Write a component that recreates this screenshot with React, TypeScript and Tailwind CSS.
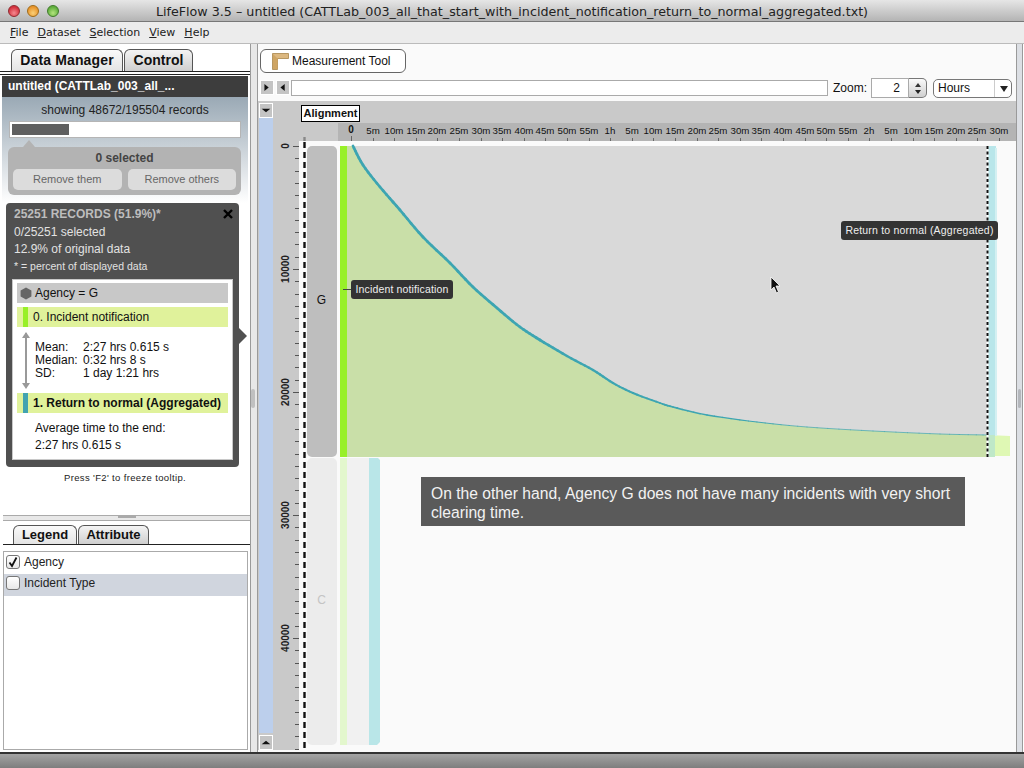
import React from 'react';

const sans = "font-['Liberation_Sans',Arial,sans-serif]";

const rulerLabels = [
    '5m', '10m', '15m', '20m', '25m', '30m', '35m', '40m', '45m', '50m', '55m', '1h',
    '5m', '10m', '15m', '20m', '25m', '30m', '35m', '40m', '45m', '50m', '55m', '2h',
    '5m', '10m', '15m', '20m', '25m', '30m',
];

// curve of the Incident notification -> Return to normal flow, in page coordinates
const curveKnots: [number, number][] = [
    [353, 146], [363, 165], [380, 187], [400, 210], [423, 237], [450, 263],
    [473, 287], [497, 308], [520, 327], [540, 340], [567, 356], [593, 370], [613, 383], [633, 393],
    [660, 403], [673, 407], [707, 415], [757, 422], [807, 427], [873, 431], [940, 434], [988, 435],
];

// catmull-rom, so the line does not show its knots
const curve: [number, number][] = [];
curveKnots.slice(0, -1).forEach((p1, i) => {
    const p0 = curveKnots[Math.max(i - 1, 0)];
    const p2 = curveKnots[i + 1];
    const p3 = curveKnots[Math.min(i + 2, curveKnots.length - 1)];
    for (let s = 0; s < 6; s++) {
        const t = s / 6;
        const at = (a: number, b: number, c: number, d: number) =>
            0.5 * (2 * b + (c - a) * t + (2 * a - 5 * b + 4 * c - d) * t * t + (3 * b - a - 3 * c + d) * t * t * t);
        curve.push([at(p0[0], p1[0], p2[0], p3[0]), at(p0[1], p1[1], p2[1], p3[1])]);
    }
});
curve.push(curveKnots[curveKnots.length - 1]);

const curvePoints = curve.map((p) => p.join(',')).join(' ');

const Tab: React.FC<{ label: string; active?: boolean; className: string }> = ({ label, active, className }) => (
    <div
        className={`flex items-center justify-center rounded-t-[6px] border border-b-0 border-[#555] font-bold text-[#111] ${className} ${
            active ? 'bg-gradient-to-b from-[#f4f4f4] to-[#cfcfcf]' : 'bg-gradient-to-b from-[#fafafa] to-[#e4e4e4]'
        }`}
    >
        {label}
    </div>
);

const MiniButton: React.FC<{ dir: 'left' | 'right' | 'up' | 'down' }> = ({ dir }) => {
    const points = {
        right: '4,3 9,7 4,11',
        left: '9,3 4,7 9,11',
        up: '2,9 7,5 12,9',
        down: '2,5 7,9 12,5',
    }[dir];
    return (
        <div className="h-[15px] w-[14px] border border-white bg-[#c4c4c4]">
            <svg width="12" height="13" viewBox="0 0 14 14">
                <polygon points={points} fill="#111" />
            </svg>
        </div>
    );
};

const Checkbox: React.FC<{ checked?: boolean }> = ({ checked }) => (
    <div className="flex h-[14px] w-[14px] items-center justify-center rounded-[3px] border border-[#777] bg-gradient-to-b from-white to-[#e8e8e8]">
        {checked && (
            <svg width="12" height="12" viewBox="0 0 12 12">
                <path d="M2.5 6.5 L5 10 L9.5 1.5" fill="none" stroke="#111" strokeWidth="1.8" />
            </svg>
        )}
    </div>
);

const Chart: React.FC = () => (
    <svg width="743" height="649" viewBox="273 101 743 649" className="block">
        <rect x="273" y="101" width="743" height="649" fill="#c9c9c9" />
        <rect x="338" y="123" width="678" height="18" fill="#b4b4b4" />
        <rect x="299" y="141" width="717" height="609" fill="#fafafa" />

        {/* top ruler */}
        <text x="351" y="133" textAnchor="middle" fontSize="10" fontWeight="700" fill="#111">0</text>
        <line x1="351.5" x2="351.5" y1="136" y2="141" stroke="#666" />
        {rulerLabels.map((label, i) => {
            const x = Math.round(351 + (i + 1) * 21.6);
            return (
                <g key={i}>
                    <text x={x} y="134" textAnchor="middle" fontSize="9.7" fill="#111">{label}</text>
                    <line x1={x + 0.5} x2={x + 0.5} y1="138" y2="141" stroke="#666" />
                </g>
            );
        })}

        {/* left axis */}
        {Array.from({ length: 50 }, (_, i) => {
            const y = Math.round(146 + i * 12.3);
            return <line key={i} x1={i % 10 === 0 ? 293 : 295} x2="299" y1={y + 0.5} y2={y + 0.5} stroke="#555" />;
        })}
        {[0, 10000, 20000, 30000, 40000].map((v, i) => {
            const y = 146 + i * 123;
            return (
                <text key={v} x="289" y={y} textAnchor="middle" fontSize="10" fontWeight="700" fill="#222" transform={`rotate(-90 289 ${y})`}>
                    {v}
                </text>
            );
        })}
        <line x1="304.5" x2="304.5" y1="137" y2="141" stroke="#888" strokeWidth="2.4" />
        <line x1="304.5" x2="304.5" y1="142" y2="750" stroke="#111" strokeWidth="2.4" strokeDasharray="6 4" />

        {/* lower sequence, faded */}
        <rect x="307" y="458" width="30" height="287" rx="5" fill="#ececec" />
        <rect x="340" y="458" width="7" height="287" fill="#e3f7cd" />
        <rect x="347" y="458" width="22" height="287" fill="#f1f1f1" />
        <path d="M369 458 H378 L380 460 V742 L377 745 H369 Z" fill="#b9e6e8" />
        <text x="321.5" y="604" textAnchor="middle" fontSize="12" fill="#c4c4c4">C</text>

        {/* G sequence */}
        <rect x="347" y="146" width="641" height="311" fill="#d9d9d9" />
        <polygon points={`347,146 ${curvePoints} 988,457 347,457`} fill="#c9dfa8" />
        <polygon points="988,435 1010,436 1010,456 988,456" fill="#dff8b4" />
        <rect x="988" y="146" width="8" height="290" fill="#b9e6ea" />
        <rect x="995" y="148" width="2" height="288" fill="#d4f0f2" />
        <rect x="988" y="435" width="7" height="22" fill="#bfe8c8" />
        <rect x="307" y="146" width="30" height="311" rx="5" fill="#bebebe" />
        <rect x="340" y="146" width="7" height="311" fill="#98f028" />
        <text x="321.5" y="304" textAnchor="middle" fontSize="12" fill="#111">G</text>
        <line x1="343" x2="351" y1="289.5" y2="289.5" stroke="#444" />
        {curve.slice(1).map((p, i) => {
            const prev = curve[i];
            const width = p[0] < 540 ? 2.7 : Math.max(0.7, 2.7 - ((p[0] - 540) / 260) * 2);
            return <line key={i} x1={prev[0]} y1={prev[1]} x2={p[0]} y2={p[1]} stroke="#3da5b2" strokeWidth={width} strokeLinecap="round" />;
        })}
        <line x1="987.5" x2="987.5" y1="146" y2="457" stroke="#fff" strokeWidth="2" />
        <line x1="987.5" x2="987.5" y1="146" y2="457" stroke="#111" strokeWidth="2" strokeDasharray="3 2.5" />
    </svg>
);

const Sidebar: React.FC = () => (
    <aside className="flex w-[250px] shrink-0 flex-col bg-white">
        <div className="flex h-[27px] items-end gap-[1px] pl-[11px]">
            <Tab label="Data Manager" className="h-[22px] w-[112px] text-[14px] tracking-[0.15px]" />
            <Tab label="Control" active className="h-[22px] w-[69px] text-[14px]" />
        </div>
        <div className="h-[4px] border-y border-[#222]" />

        <div className="mx-[2px] mt-[1px] flex h-[21px] items-center bg-[#3d3d3d] pb-[1px] pl-[6px] text-[12px] font-bold text-white">
            untitled (CATTLab_003_all_...
        </div>

        <div className="mx-[2px] bg-gradient-to-b from-[#9aa9b5] to-white px-[7px] pb-[8px]">
            <div className="pt-[5px] text-center text-[12px] leading-[16px] text-[#222]">showing 48672/195504 records</div>
            <div className="mt-[3px] flex h-[17px] items-center border border-[#b5b5b5] bg-white pl-[2px]">
                <div className="h-[11px] w-[57px] bg-[#5f5f5f]" />
            </div>
            <div className="ml-[14px] mt-[2px] h-0 w-0 border-x-[6px] border-b-[7px] border-x-transparent border-b-[#b3b3b3]" />
            <div className="-ml-[1px] w-[233px] rounded-[6px] bg-[#b3b3b3] px-[5px] pb-[5px]">
                <div className="flex h-[22px] items-center justify-center text-[12px] font-bold text-[#444]">0 selected</div>
                <div className="flex gap-[6px]">
                    <div className="flex h-[21px] w-[109px] items-center justify-center rounded-[5px] bg-[#dcdcdc] text-[11px] text-[#666]">Remove them</div>
                    <div className="flex h-[21px] w-[109px] items-center justify-center rounded-[5px] bg-[#dcdcdc] text-[11px] text-[#666]">Remove others</div>
                </div>
            </div>
        </div>

        <div className="relative ml-[6px] w-[233px] rounded-[4px] bg-[#505050] px-[6px] pb-[7px]">
            <svg width="10" height="10" viewBox="0 0 10 10" className="absolute right-[6px] top-[6px]">
                <path d="M1 1 L9 9 M9 1 L1 9" stroke="#000" strokeWidth="2.4" />
            </svg>
            <div className="absolute -right-[8px] top-[125px] h-0 w-0 border-y-[8px] border-l-[8px] border-y-transparent border-l-[#505050]" />
            <div className="pl-[2px] pt-[3px] text-[12px] leading-[17px] text-[#e2e2e2]">
                <div className="font-bold text-[#bdbdbd]">25251 RECORDS (51.9%)*</div>
                <div className="mt-[1px]">0/25251 selected</div>
                <div>12.9% of original data</div>
                <div className="text-[10.5px]">* = percent of displayed data</div>
            </div>
            <div className="mt-[4px] h-[181px] border border-[#c8c8c8] bg-white px-[4px] pt-[3px] text-[12px] text-[#111]">
                <div className="flex h-[20px] items-center gap-[3px] bg-[#c8c8c8] pl-[3px]">
                    <svg width="12" height="13" viewBox="0 0 12 13">
                        <polygon points="6,0.5 11.4,3.5 11.4,9.5 6,12.5 0.6,9.5 0.6,3.5" fill="#666" />
                    </svg>
                    Agency = G
                </div>
                <div className="mt-[4px] flex h-[20px] items-center bg-[#e0f29b]">
                    <div className="ml-[6px] h-full w-[5px] bg-[#98f028]" />
                    <span className="ml-[5px]">0. Incident notification</span>
                </div>
                <div className="flex h-[66px] items-start">
                    <svg width="18" height="66" viewBox="0 0 18 66" className="shrink-0">
                        <line x1="9" x2="9" y1="6" y2="58" stroke="#999" strokeWidth="2" />
                        <polygon points="9,5 13,11 5,11" fill="#999" />
                        <polygon points="9,62 13,56 5,56" fill="#999" />
                    </svg>
                    <div className="mt-[14px] grid grid-cols-[48px_auto] text-[12px] leading-[13px]">
                        <span>Mean:</span>
                        <span>2:27 hrs 0.615 s</span>
                        <span>Median:</span>
                        <span>0:32 hrs 8 s</span>
                        <span>SD:</span>
                        <span>1 day 1:21 hrs</span>
                    </div>
                </div>
                <div className="flex h-[20px] items-center bg-[#e0f29b] font-bold">
                    <div className="ml-[6px] h-full w-[5px] bg-[#42a3b0]" />
                    <span className="ml-[5px]">1. Return to normal (Aggregated)</span>
                </div>
                <div className="pl-[18px] pt-[7px] leading-[17px]">
                    <div>Average time to the end:</div>
                    <div>2:27 hrs 0.615 s</div>
                </div>
            </div>
        </div>

        <div className="mt-[5px] text-center text-[9.5px] leading-[12px] tracking-[0.35px] text-[#222]">Press 'F2' to freeze tooltip.</div>

        <div className="flex-1" />

        <div className="flex h-[237px] flex-col">
            <div className="ml-[3px] flex h-[6px] justify-center border-y border-[#aaa] bg-[#e8e8e8]">
                <div className="h-[2px] w-[18px] bg-[#aaa]" />
            </div>
            <div className="ml-[3px] mt-[3px] flex h-[20px] items-end gap-[1px] pl-[10px]">
                <Tab label="Legend" className="h-[19px] w-[64px] text-[13px]" />
                <Tab label="Attribute" active className="h-[19px] w-[71px] text-[13px]" />
            </div>
            <div className="ml-[3px] h-[2px] border-t border-[#222]" />
            <div className="ml-[3px] mt-[5px] h-[199px] w-[245px] border border-[#aaa] bg-white text-[12px] text-[#222]">
                <div className="flex h-[22px] items-center gap-[4px] pb-[3px] pl-[2px]">
                    <Checkbox checked />
                    Agency
                </div>
                <div className="flex h-[22px] items-center gap-[4px] bg-[#d0d5de] pb-[4px] pl-[2px]">
                    <Checkbox />
                    Incident Type
                </div>
            </div>
        </div>
    </aside>
);

const App: React.FC = () => {
    return (
        <div className={`flex h-[768px] w-[1024px] flex-col overflow-hidden bg-white ${sans}`}>
            <header className="relative flex h-[22px] shrink-0 items-center justify-center border-b border-[#777] bg-gradient-to-b from-[#e6e6e6] to-[#b4b4b4] pt-[3px] font-['DejaVu_Sans',sans-serif] text-[12.7px] text-[#222]">
                <div className="absolute left-[8px] top-[5px] flex gap-[7px]">
                    <span className="h-[12px] w-[12px] rounded-full border border-[#8f2a30] bg-[radial-gradient(circle_at_50%_70%,#f58a90,#d3303c_70%)]" />
                    <span className="h-[12px] w-[12px] rounded-full border border-[#a06a18] bg-[radial-gradient(circle_at_50%_70%,#fad078,#e8942a_70%)]" />
                    <span className="ml-[1px] h-[12px] w-[12px] rounded-full border border-[#3f7a2a] bg-[radial-gradient(circle_at_50%_70%,#b4e47e,#5fae3c_70%)]" />
                </div>
                LifeFlow 3.5 – untitled (CATTLab_003_all_that_start_with_incident_notification_return_to_normal_aggregated.txt)
            </header>

            <nav className="flex h-[22px] shrink-0 items-center gap-[9px] border-b border-[#bbb] bg-[#ececec] pl-[10px] pt-[1px] font-['DejaVu_Sans',sans-serif] text-[11px] text-[#222]">
                <span><u>F</u>ile</span>
                <span><u>D</u>ataset</span>
                <span><u>S</u>election</span>
                <span><u>V</u>iew</span>
                <span><u>H</u>elp</span>
            </nav>

            <main className="flex h-[708px] shrink-0">
                <Sidebar />

                <div className="flex w-[8px] shrink-0 items-center border-x border-[#9a9a9a] bg-[#e8e8e8]">
                    <div className="h-[19px] w-[4px] rounded-[2px] bg-[#c0c0c0]" />
                </div>

                <section className="flex w-[758px] shrink-0 flex-col bg-[#fafafa]">
                    <div className="pl-[2px] pt-[5px]">
                        <div className="flex h-[24px] w-[146px] items-center gap-[3px] rounded-[6px] border border-[#666] bg-white pl-[11px] text-[12px] text-[#111]">
                            <svg width="17" height="17" viewBox="0 0 17 17">
                                <polygon points="0.5,0.5 16.5,0.5 16.5,5.5 5.5,5.5 5.5,16.5 0.5,16.5" fill="#dcb880" stroke="#a8854a" strokeWidth="0.8" />
                                <polygon points="1,1 5.5,5.5 5.5,16 1,16" fill="#cfa563" />
                            </svg>
                            Measurement Tool
                        </div>
                    </div>

                    <div className="mt-[7px] flex h-[21px] items-start pl-[2px]">
                        <MiniButton dir="right" />
                        <div className="ml-[2px]"><MiniButton dir="left" /></div>
                        <div className="ml-[1px] h-[16px] w-[537px] border border-[#aaa] bg-white" />
                        <span className="ml-[5px] text-[12px] leading-[16px] text-[#111]">Zoom:</span>
                        <div className="ml-[4px] flex h-[20px] w-[56px] -translate-y-[2px]">
                            <div className="w-[38px] border border-[#aaa] bg-white pr-[8px] text-right text-[12px] leading-[18px] text-[#111]">2</div>
                            <div className="flex w-[18px] flex-col items-center justify-center gap-[3px] rounded-r-[5px] border border-l-0 border-[#777] bg-gradient-to-b from-[#fafafa] to-[#cfcfcf]">
                                <div className="h-0 w-0 border-x-[3px] border-b-[4px] border-x-transparent border-b-[#333]" />
                                <div className="h-0 w-0 border-x-[3px] border-t-[4px] border-x-transparent border-t-[#222]" />
                            </div>
                        </div>
                        <div className="ml-[6px] flex h-[19px] w-[79px] -translate-y-[1px] items-center rounded-[5px] border border-[#777] bg-white text-[12px] text-[#111]">
                            <span className="w-[61px] border-r border-[#ccc] pl-[4px] leading-[17px]">Hours</span>
                            <div className="ml-[5px] h-0 w-0 border-x-[4px] border-t-[6px] border-x-transparent border-t-[#222]" />
                        </div>
                    </div>

                    <div className="flex">
                        <div className="flex h-[649px] w-[15px] flex-col bg-[#c9c9c9] pl-[1px]">
                            <div className="h-[17px] pt-[2px]"><MiniButton dir="down" /></div>
                            <div className="h-[615px] w-[14px] bg-[#bccfec]" />
                            <div className="pt-[2px]"><MiniButton dir="up" /></div>
                        </div>

                        <div className="relative h-[649px] w-[743px]">
                            <Chart />
                            <div className="absolute left-[28px] top-[4px] flex h-[17px] w-[59px] items-center justify-center border border-black bg-white text-[11px] font-bold text-[#111]">Alignment</div>
                            <div className="absolute left-[78px] top-[179px] flex h-[19px] w-[102px] items-center justify-center rounded-[3px] bg-[#333] text-[10.5px] tracking-[0.15px] text-[#eee]">Incident notification</div>
                            <div className="absolute left-[568px] top-[120px] flex h-[19px] w-[157px] items-center justify-center rounded-[3px] bg-[#333] text-[10.5px] tracking-[0.2px] text-[#eee]">Return to normal (Aggregated)</div>
                            <div className="absolute left-[148px] top-[376px] h-[49px] w-[544px] bg-[#5a5a5a] px-[10px] py-[7px] text-[15.65px] leading-[19px] text-[#f2f2f2]">
                                On the other hand, Agency G does not have many incidents with very short clearing time.
                            </div>
                            <svg width="12" height="18" viewBox="0 0 12 18" className="absolute left-[497px] top-[175px]">
                                <path d="M1 1 L1 14 L4 11 L6.5 17 L8.5 16 L6 10 L10 10 Z" fill="#111" stroke="#fff" strokeWidth="0.8" />
                            </svg>
                        </div>
                    </div>
                </section>

                <div className="flex w-[8px] shrink-0 items-center bg-white">
                    <div className="flex h-full w-[7px] items-center border-x border-[#9a9a9a] bg-[#dcdfe4]">
                        <div className="h-[19px] w-[3px] translate-x-[1px] rounded-[2px] bg-[#b4b7bc]" />
                    </div>
                </div>
            </main>

            <footer className="h-[16px] shrink-0 border-t-2 border-[#333] bg-gradient-to-b from-[#a4a4a4] to-[#7e7e7e]" />
        </div>
    );
};

export default App;
